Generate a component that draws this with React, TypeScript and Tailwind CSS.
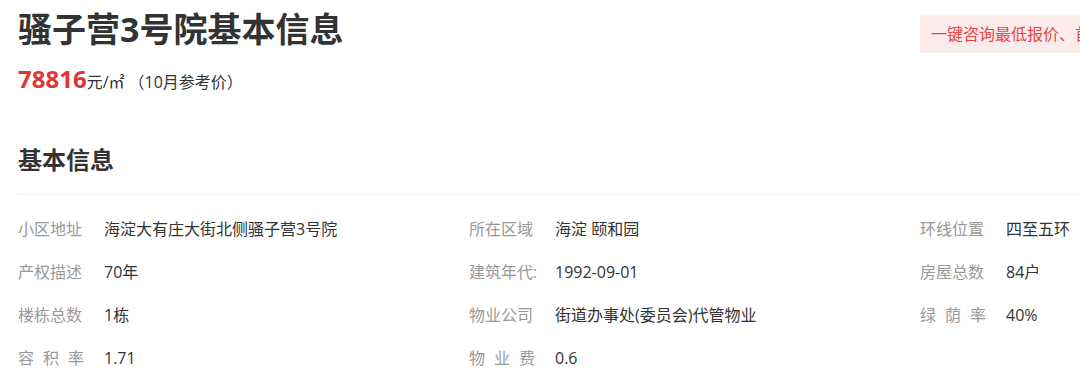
const ROWS: [string, string][][] = [
  [
    ["小区地址", "海淀大有庄大街北侧骚子营3号院"],
    ["所在区域", "海淀 颐和园"],
    ["环线位置", "四至五环"],
  ],
  [
    ["产权描述", "70年"],
    ["建筑年代:", "1992-09-01"],
    ["房屋总数", "84户"],
  ],
  [
    ["楼栋总数", "1栋"],
    ["物业公司", "街道办事处(委员会)代管物业"],
    ["绿荫率", "40%"],
  ],
  [
    ["容积率", "1.71"],
    ["物业费", "0.6"],
  ],
];

function Label({ text }: { text: string }) {
  // three-character labels are spread out to the width of four
  if (text.length === 3) {
    return (
      <span className="flex w-[66px] justify-between text-[#999]">
        {text.split("").map((c, i) => (
          <span key={i}>{c}</span>
        ))}
      </span>
    );
  }
  return <span className="text-[#999]">{text}</span>;
}

export default function App() {
  return (
    <div
      className="h-[381px] w-[1080px] overflow-hidden bg-white pl-[18px] text-[#333]"
      style={{ fontFamily: "'Open Sans', 'Noto Sans CJK SC', sans-serif" }}
    >
      <div className="w-[1400px]">
        {/* Header */}
        <div className="flex items-start">
          <div className="w-[902px] shrink-0">
            <h1 className="mt-[5px] text-[34px] font-bold leading-[48px] text-[#333]">
              骚子营3号院基本信息
            </h1>
            <div className="mt-[10px] flex items-baseline leading-[32px]">
              <span className="text-[24px] font-bold text-[#e03535]">78816</span>
              <span className="text-[16px] text-[#333]">元/㎡</span>
              <span className="ml-[4px] text-[16px] text-[#333]">（10月参考价）</span>
            </div>
          </div>
          <button
            type="button"
            className="mt-[15px] h-[38px] whitespace-nowrap bg-[#fcebeb] px-[11px] text-[16px] text-[#e64545]"
          >
            一键咨询最低报价、首付月供
          </button>
        </div>

        {/* Basic info */}
        <h2 className="mt-[46px] text-[24px] font-bold leading-[32px] text-[#333]">
          基本信息
        </h2>
        <div className="mt-[18px] border-b border-[#f2f2f2]" />

        <div className="mt-[13px]">
          {ROWS.map((row, r) => (
            <div key={r} className="grid grid-cols-[451px_451px_451px] text-[16px] leading-[43px]">
              {row.map(([label, value]) => (
                <div key={label} className="flex">
                  <div className="w-[86px] shrink-0">
                    <Label text={label} />
                  </div>
                  <span className="text-[#333]">{value}</span>
                </div>
              ))}
            </div>
          ))}
        </div>
      </div>
    </div>
  );
}
